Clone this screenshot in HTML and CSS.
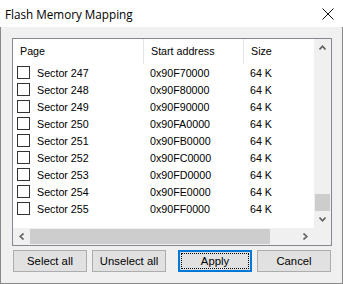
FILE: index.html
```html
<!DOCTYPE html>
<html lang="en">

<head>
    <meta charset="UTF-8">
    <title>Flash Memory Mapping</title>
    <link rel="stylesheet" href="styles.css">
</head>

<body>
    <div class="window">
        <div class="titlebar">
            <span class="title">Flash Memory Mapping</span>
            <svg class="close" width="12" height="12" viewBox="0 0 12 12">
                <path d="M0.5 0.5 L11.5 11.5 M11.5 0.5 L0.5 11.5" stroke="#111" stroke-width="1" fill="none"/>
            </svg>
        </div>
        <div class="dialog">
            <div class="listbox">
                <div class="viewport">
                    <div class="content">
                        <div class="header">
                            <div class="col col-page">Page</div>
                            <div class="col col-addr">Start address</div>
                            <div class="col col-size">Size</div>
                        </div>
                        <div class="rows" id="rows"></div>
                    </div>
                    <div class="vscroll">
                        <div class="arrow">
                            <svg width="7" height="5" viewBox="0 0 7 5"><polyline points="0.5,4.5 3.5,1.2 6.5,4.5" stroke="#606060" stroke-width="1.6" fill="none"/></svg>
                        </div>
                        <div class="vtrack"></div>
                        <div class="vthumb"></div>
                        <div class="arrow">
                            <svg width="7" height="5" viewBox="0 0 7 5"><polyline points="0.5,0.5 3.5,3.8 6.5,0.5" stroke="#606060" stroke-width="1.6" fill="none"/></svg>
                        </div>
                    </div>
                </div>
                <div class="hscroll-row">
                    <div class="hscroll">
                        <div class="arrow">
                            <svg width="5" height="7" viewBox="0 0 5 7"><polyline points="4.5,0.5 1.2,3.5 4.5,6.5" stroke="#606060" stroke-width="1.6" fill="none"/></svg>
                        </div>
                        <div class="hthumb"></div>
                        <div class="htrack"></div>
                        <div class="arrow">
                            <svg width="5" height="7" viewBox="0 0 5 7"><polyline points="0.5,0.5 3.8,3.5 0.5,6.5" stroke="#606060" stroke-width="1.6" fill="none"/></svg>
                        </div>
                    </div>
                    <div class="corner"></div>
                </div>
            </div>
            <div class="buttons">
                <button type="button">Select all</button>
                <button type="button">Unselect all</button>
                <button type="button" class="default"><span>Apply</span></button>
                <button type="button">Cancel</button>
            </div>
        </div>
    </div>

    <script>
        const rows = document.getElementById('rows');
        for (let sector = 247; sector <= 255; sector++) {
            const addr = '0x90F' + (sector - 240).toString(16).toUpperCase() + '0000';
            const row = document.createElement('div');
            row.classList.add('row');
            row.innerHTML = `
                <div class="col col-page"><span class="check"></span>Sector ${sector}</div>
                <div class="col col-addr">${addr}</div>
                <div class="col col-size">64 K</div>
            `;
            rows.appendChild(row);
        }
    </script>
</body>

</html>
```

FILE: styles.css
```css
/* Dialog window */

* {
    box-sizing: border-box;
}

body {
    margin: 0;
    font-family: "Liberation Sans", Arial, sans-serif;
    font-size: 10.7px;
    color: #000;
}

.window {
    width: 343px;
    height: 284px;
    display: flex;
    flex-direction: column;
    background-color: #f0f0f0;
    border: 1px solid #8a8a8a;
    border-top: none;
}

.titlebar {
    height: 27px;
    display: flex;
    align-items: center;
    justify-content: space-between;
    background-color: #fff;
    padding: 0 9px 0 5px;
    margin: 0 -1px;
}

.title {
    font-family: "Open Sans", "Noto Sans", sans-serif;
    font-size: 11.7px;
    color: #000;
    padding-top: 1px;
}

.close {
    display: block;
}

.dialog {
    flex: 1;
    display: flex;
    flex-direction: column;
    padding: 11px 10px 0 11px;
}

/* List view */

.listbox {
    width: 320px;
    height: 208px;
    border: 1px solid #828790;
    background-color: #fff;
    display: flex;
    flex-direction: column;
}

.viewport {
    flex: 1;
    display: flex;
}

.content {
    flex: 1;
    overflow: hidden;
}

.header {
    height: 25px;
    display: flex;
    align-items: center;
}

.header .col {
    height: 100%;
    display: flex;
    align-items: center;
    padding-bottom: 2px;
}

.header .col-addr,
.header .col-size {
    border-left: 1px solid #e5e5e5;
}

.col-page {
    width: 130px;
    padding-left: 7px;
}

.col-addr {
    width: 100px;
    padding-left: 7px;
}

.col-size {
    flex: 1;
    padding-left: 7px;
}

.row {
    height: 17px;
    display: flex;
    align-items: center;
}

.row .col-page {
    display: flex;
    align-items: center;
    padding-left: 4px;
}

.check {
    width: 13px;
    height: 13px;
    border: 1px solid #333;
    background-color: #fff;
    margin-right: 7px;
}

/* Scroll bars */

.vscroll {
    width: 17px;
    display: flex;
    flex-direction: column;
    background-color: #f0f0f0;
}

.arrow {
    width: 17px;
    height: 17px;
    display: flex;
    align-items: center;
    justify-content: center;
}

.arrow svg {
    display: block;
}

.vtrack {
    flex: 1;
}

.vthumb {
    height: 17px;
    margin: 0 1px;
    background-color: #cdcdcd;
}

.hscroll-row {
    height: 17px;
    display: flex;
}

.hscroll {
    flex: 1;
    display: flex;
    background-color: #f0f0f0;
}

.hthumb {
    width: 240px;
    margin: 1px 0;
    background-color: #cdcdcd;
}

.htrack {
    flex: 1;
}

.corner {
    width: 17px;
    background-color: #f0f0f0;
}

/* Buttons */

.buttons {
    display: flex;
    margin-top: 4px;
    padding-left: 1px;
}

button {
    width: 74px;
    height: 22px;
    margin-right: 5px;
    padding: 0;
    border: 1px solid #adadad;
    background-color: #e1e1e1;
    font-family: "Liberation Sans", Arial, sans-serif;
    font-size: 11.3px;
    color: #000;
}

button.default {
    margin-left: 7px;
    border: 2px solid #0078d7;
    padding: 1px;
}

button.default span {
    display: flex;
    height: 100%;
    align-items: center;
    justify-content: center;
    border: 1px dotted #000;
}

button:last-child {
    margin-right: 0;
}
```
